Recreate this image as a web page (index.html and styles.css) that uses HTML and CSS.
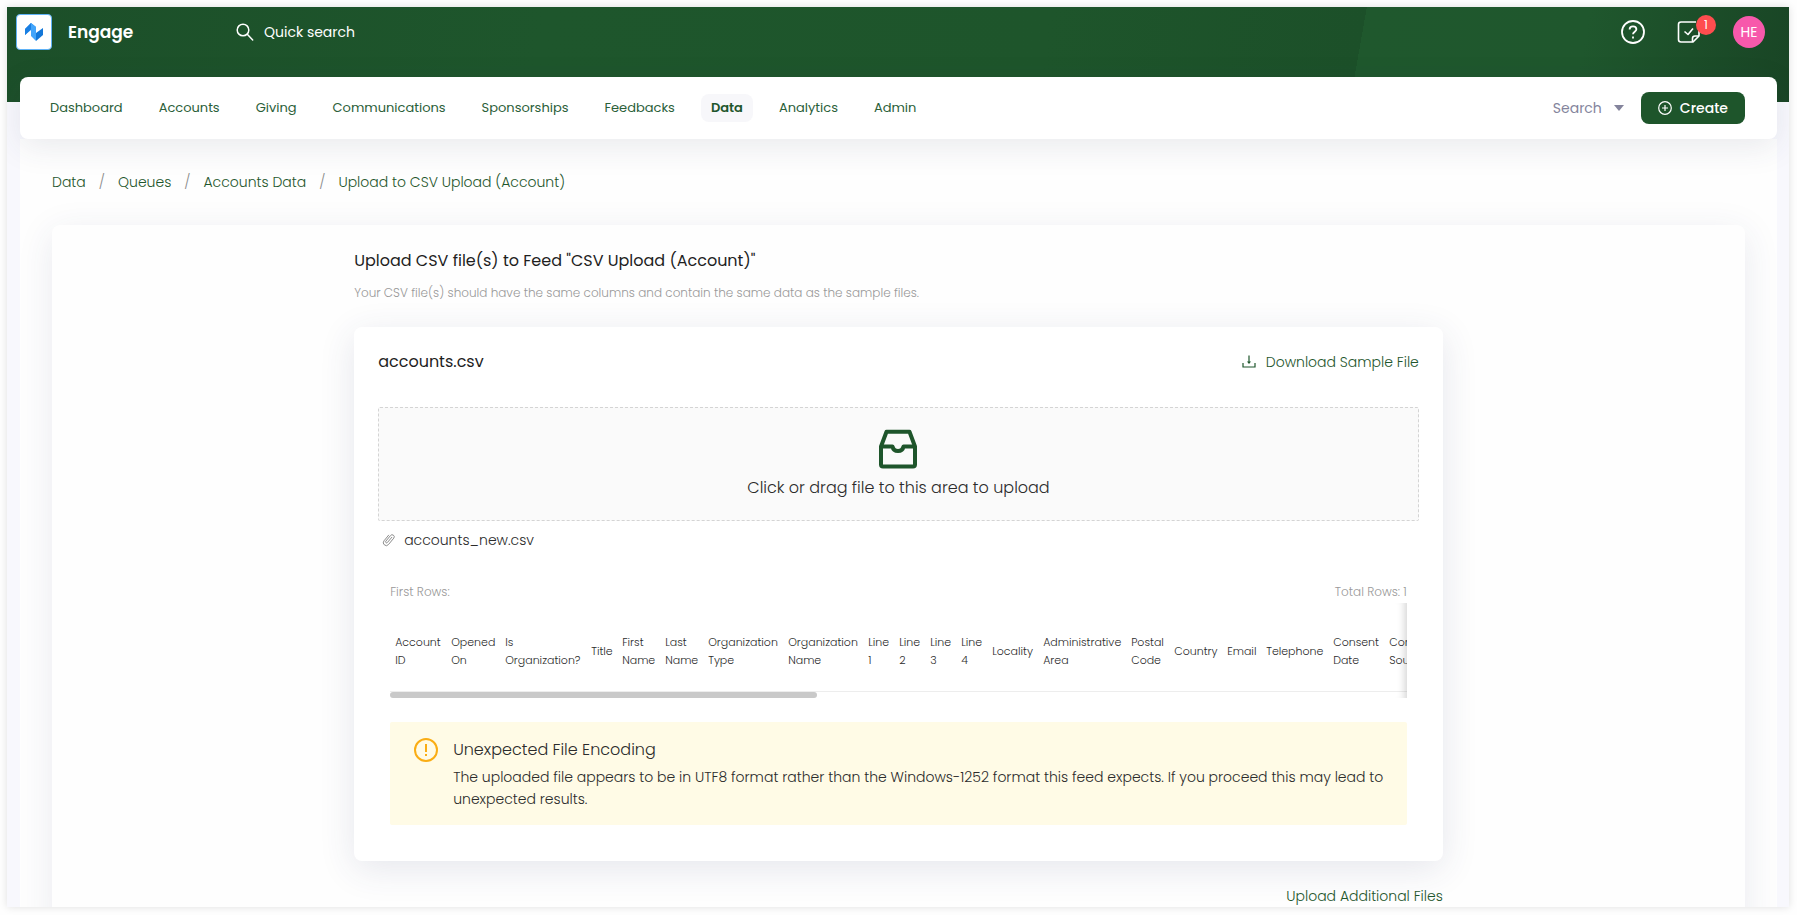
FILE: index.html
```html
<!DOCTYPE html>
<html lang="en">
<head>
<meta charset="utf-8">
<meta name="viewport" content="width=device-width, initial-scale=1">
<title>Engage - Upload to CSV Upload (Account)</title>
<link rel="stylesheet" href="styles.css">
</head>
<body>
<div class="app">
  <header class="topbar">
    <a class="brand" href="#">
      <span class="brand-logo">
        <svg viewBox="0 0 20 20" width="20" height="20" aria-hidden="true">
          <path d="M1 7 7 1l5 4v8l-5-5-6 5z" fill="#2b8ff0"/>
          <path d="M1 7l6-6v6l-6 6z" fill="#1a7fe2"/>
          <path d="M7 1l5 4v14l-5-5z" fill="#42a5fb"/>
          <path d="M12 11l7-5v7l-7 6z" fill="#1377d8"/>
        </svg>
      </span>
      <span class="brand-name">Engage</span>
    </a>
    <button class="quick-search" type="button">
      <svg viewBox="0 0 18 18" width="18" height="18" fill="none" stroke="currentColor" stroke-width="1.5" stroke-linecap="round" aria-hidden="true"><circle cx="7" cy="7" r="5.8"/><path d="M11.3 11.3l5.4 5.6"/></svg>
      Quick search
    </button>
    <div class="top-actions">
      <button class="icon-button" type="button" aria-label="Help">
        <svg viewBox="0 0 24 24" width="24" height="24" fill="none" stroke="currentColor" stroke-width="1.8" aria-hidden="true"><circle cx="12" cy="12" r="11"/><path d="M8.6 9.4c0-2 1.5-3 3.4-3s3.4 1.1 3.4 2.900c0 2.300-3.400 2.500-3.400 4.900"/><path d="M12 16.600v2"/></svg>
      </button>
      <button class="icon-button" type="button" aria-label="Tasks">
        <svg viewBox="0 0 24 24" width="24" height="24" fill="none" stroke="currentColor" stroke-width="1.600" stroke-linejoin="round" aria-hidden="true"><path d="M22 10v6l-6 6H4a2.500 2.500 0 0 1-2.500-2.500v-15A2.500 2.500 0 0 1 4 2h15"/><path d="M15.500 22v-3.500a2.500 2.500 0 0 1 2.500-2.500h4"/><path d="M7.500 11.500l3.500 3 5-6"/></svg>
        <span class="badge">1</span>
      </button>
      <button class="avatar" type="button" aria-label="Account menu">HE</button>
    </div>
  </header>

  <nav class="navbar" aria-label="Main">
    <ul class="menu">
      <li><a href="#">Dashboard</a></li>
      <li><a href="#">Accounts</a></li>
      <li><a href="#">Giving</a></li>
      <li><a href="#">Communications</a></li>
      <li><a href="#">Sponsorships</a></li>
      <li><a href="#">Feedbacks</a></li>
      <li><a class="active" href="#" aria-current="page">Data</a></li>
      <li><a href="#">Analytics</a></li>
      <li><a href="#">Admin</a></li>
    </ul>
    <button class="search-menu" type="button">Search <span class="caret"></span></button>
    <button class="create" type="button">
      <svg viewBox="0 0 14 14" width="14" height="14" fill="none" stroke="currentColor" stroke-width="1.200" aria-hidden="true"><circle cx="7" cy="7" r="6.300"/><path d="M7 4v6M4 7h6"/></svg>
      Create
    </button>
  </nav>

  <main class="content">
    <ol class="breadcrumb" aria-label="Breadcrumb">
      <li><a href="#">Data</a></li>
      <li><a href="#">Queues</a></li>
      <li><a href="#">Accounts Data</a></li>
      <li><a href="#">Upload to CSV Upload (Account)</a></li>
    </ol>

    <section class="panel">
      <div class="panel-column">
        <h1 class="title">Upload CSV file(s) to Feed "CSV Upload (Account)"</h1>
        <p class="subtitle">Your CSV file(s) should have the same columns and contain the same data as the sample files.</p>

        <article class="file-card">
          <header class="file-head">
            <h2 class="title">accounts.csv</h2>
            <a class="download" href="#">
              <svg viewBox="0 0 14 14" width="14" height="14" fill="none" stroke="currentColor" stroke-width="1.200" aria-hidden="true"><path d="M1 8v4h12V8M7 .5v7"/><path d="M5 6.500h4L7 9z" fill="currentColor" stroke="none"/></svg>
              Download Sample File
            </a>
          </header>

          <button class="dropzone" type="button">
            <svg viewBox="0 0 40 40" width="40" height="40" fill="none" stroke="currentColor" stroke-width="4" stroke-linejoin="round" aria-hidden="true"><path d="M3 17.500 8.500 2.800h23L37 17.500V35.500a2 2 0 0 1-2 2H5a2 2 0 0 1-2-2z"/><path d="M3 17.500h11.500c.6 3 2.700 4.500 5.500 4.500s4.900-1.500 5.500-4.500H37"/></svg>
            Click or drag file to this area to upload
          </button>

          <div class="attachment">
            <svg viewBox="0 0 14 14" width="14" height="14" fill="none" stroke="currentColor" stroke-width="1" stroke-linecap="round" aria-hidden="true"><path d="M9.800 4.300 5.400 9.500a1 1 0 0 1-1.600-1.300l4.700-5.600a2 2 0 0 1 3.300 2.500l-5.300 6.400a2.900 2.900 0 0 1-4.500-3.700l4.600-5.600"/></svg>
            accounts_new.csv
          </div>

          <div class="preview">
            <div class="preview-head"><span>First Rows:</span><span>Total Rows: 1</span></div>
            <div class="table-view">
              <table class="preview-table">
                <colgroup>
                  <col class="w56"><col class="w54"><col class="w86"><col class="w31"><col class="w43"><col class="w43"><col class="w80"><col class="w80">
                  <col class="w31"><col class="w31"><col class="w31"><col class="w31"><col class="w51"><col class="w88"><col class="w43"><col class="w53"><col class="w39"><col class="w67"><col class="w56"><col class="w56">
                </colgroup>
                <thead>
                  <tr>
                    <th scope="col">Account ID</th><th scope="col">Opened On</th><th scope="col">Is Organization?</th><th scope="col">Title</th><th scope="col">First Name</th><th scope="col">Last Name</th><th scope="col">Organization Type</th><th scope="col">Organization Name</th><th scope="col">Line<br>1</th><th scope="col">Line<br>2</th><th scope="col">Line<br>3</th><th scope="col">Line<br>4</th><th scope="col">Locality</th><th scope="col">Administrative Area</th><th scope="col">Postal Code</th><th scope="col">Country</th><th scope="col">Email</th><th scope="col">Telephone</th><th scope="col">Consent Date</th><th scope="col">Consent Source</th>
                  </tr>
                </thead>
              </table>
              <div class="scroll-thumb"></div>
            </div>

            <div class="alert" role="alert">
              <svg viewBox="0 0 24 24" width="24" height="24" fill="none" stroke="currentColor" stroke-width="2" aria-hidden="true"><circle cx="12" cy="12" r="11"/><path d="M12 6v8M12 16v2"/></svg>
              <div>
                <h3 class="alert-title">Unexpected File Encoding</h3>
                <p class="alert-text">The uploaded file appears to be in UTF8 format rather than the Windows-1252 format this feed expects. If you proceed this may lead to unexpected results.</p>
              </div>
            </div>
          </div>
        </article>

        <a class="more-files" href="#">Upload Additional Files</a>
      </div>
    </section>
  </main>
</div>
</body>
</html>
```

FILE: styles.css
```css
* { box-sizing: border-box; }

body {
  margin: 0;
  background: #fefefe;
  color: #2b2b2b;
  font-family: Poppins, Inter, "Liberation Sans", sans-serif;
  font-size: 14px;
  font-weight: 300;
  line-height: 22px;
}

h1, h2, h3, p, ul, ol { margin: 0; padding: 0; font-weight: inherit; }
ul, ol { list-style: none; }
a { color: #1e562c; text-decoration: none; }
svg { display: block; flex: none; }
button { border: 0; padding: 0; background: none; color: inherit; font: inherit; cursor: pointer; }

.app {
  display: flex;
  flex-direction: column;
  height: calc(100vh - 15px);
  margin: 7px 8px 8px 7px;
  overflow: hidden;
  background: linear-gradient(100deg, #1c4f29 0, #1e562c 30%, #1e552b 58%, #1c5029 75.6%, #1f582d 75.6%, #1f572d 88%, #194525 100%) top / 100% 95px no-repeat #f8f8fd;
  box-shadow: 0 0 8px rgba(0, 0, 0, .12);
}

.topbar {
  display: flex;
  align-items: center;
  flex: none;
  height: 50px;
  margin-bottom: 20px;
  padding: 0 24px 0 9px;
  color: #fff;
}
.brand { display: flex; align-items: center; gap: 16px; width: 220px; color: #fff; }
.brand-logo {
  display: grid;
  place-items: center;
  width: 36px;
  height: 36px;
  border: 1px solid #5fb2f7;
  border-radius: 4px;
  background: #fff;
}
.brand-name { font-size: 17px; font-weight: 600; }
.quick-search { display: flex; align-items: center; gap: 10px; font-weight: 400; }
.top-actions { display: flex; align-items: center; gap: 32px; margin-left: auto; }
.icon-button { position: relative; }
.badge {
  position: absolute;
  top: -5px;
  right: -15px;
  width: 20px;
  border-radius: 10px;
  background: #ff4d4f;
  font-size: 12px;
  font-weight: 400;
  line-height: 20px;
}
.avatar { width: 32px; height: 32px; border-radius: 50%; background: #f759ab; font-weight: 400; }

.navbar {
  display: flex;
  align-items: center;
  flex: none;
  z-index: 1;
  height: 62px;
  margin: 0 12px 0 13px;
  padding: 0 32px 0 20px;
  border-radius: 8px;
  background: #fff;
  box-shadow: 0 8px 32px rgba(50, 60, 90, .1);
}
.menu { display: flex; gap: 16px; margin-right: auto; font-size: 13px; font-weight: 400; }
.menu a { display: block; padding: 3px 10px; border-radius: 8px; color: #2b6039; }
.menu .active { background: #f7f7fa; color: #1e562c; font-weight: 600; }
.search-menu { display: flex; align-items: center; gap: 12px; margin-right: 17px; color: #84849c; font-weight: 400; }
.caret { border: 5px solid transparent; border-top: 6px solid #84849c; border-bottom: 0; }
.create {
  display: flex;
  align-items: center;
  gap: 8px;
  height: 32px;
  padding: 0 17px;
  border-radius: 8px;
  background: #1e552b;
  color: #fff;
  font-weight: 500;
}

.content {
  flex: 1;
  margin: 0 12px 0 13px;
  padding: 32px 32px 0;
  background: #fefefe;
  overflow: hidden;
}
.breadcrumb { display: flex; margin-bottom: 32px; }
.breadcrumb li + li::before { content: "/"; margin: 0 13px; color: #8c8c8c; }

.panel {
  display: grid;
  grid-template-columns: 1fr 4fr 1fr;
  padding: 24px 30px;
  border-radius: 8px;
  background: #fefefe;
  box-shadow: 0 8px 36px rgba(50, 60, 110, .1);
}
.panel-column { display: flex; flex-direction: column; grid-column: 2; min-width: 0; }
.title { color: #1f1f1f; font-size: 16px; font-weight: 400; line-height: 24px; }
.subtitle { margin: 9px 0 23px; color: #999; font-size: 12px; }

.file-card {
  padding: 24px 24px 36px;
  border-radius: 8px;
  background: #fff;
  box-shadow: 0 8px 36px rgba(50, 60, 110, .12);
}
.file-head { display: flex; justify-content: space-between; align-items: center; margin-bottom: 34px; }
.file-head .title { line-height: 22px; }
.download { display: flex; align-items: center; gap: 10px; }
.dropzone {
  display: flex;
  flex-direction: column;
  align-items: center;
  gap: 6px;
  width: 100%;
  padding: 21px 0 20px;
  border: 1px dashed #d4d4d4;
  border-radius: 2px;
  background: #fafafa;
  font-size: 16px;
  line-height: 25px;
}
.dropzone svg { color: #1e552b; }
.attachment { display: flex; align-items: center; gap: 8px; padding: 8px 4px 0; }
.attachment svg { color: #8c8c8c; }

.preview { padding: 30px 12px 0; }
.preview-head { display: flex; justify-content: space-between; color: #999; font-size: 12px; }
.table-view { position: relative; overflow: hidden; }
.table-view::after {
  content: "";
  position: absolute;
  inset: 0;
  box-shadow: inset -10px 0 8px -8px rgba(0, 0, 0, .18);
  pointer-events: none;
}
.preview-table { table-layout: fixed; width: 1050px; border-collapse: collapse; }
.preview-table th {
  height: 88px;
  padding: 8px 0 0 5px;
  border-bottom: 1px solid #ededed;
  font-size: 11px;
  font-weight: 300;
  line-height: 18px;
  text-align: left;
}
.w31 { width: 31px; }
.w39 { width: 39px; }
.w43 { width: 43px; }
.w51 { width: 51px; }
.w53 { width: 53px; }
.w54 { width: 54px; }
.w56 { width: 56px; }
.w67 { width: 67px; }
.w80 { width: 80px; }
.w86 { width: 86px; }
.w88 { width: 88px; }
.scroll-thumb { width: 42%; height: 6px; border-radius: 3px; background: #c9c9c9; }

.alert {
  display: flex;
  gap: 15px;
  margin-top: 24px;
  padding: 16px 20px 15px 24px;
  border-radius: 2px;
  background: #fffbe6;
}
.alert svg { color: #faad14; }
.alert-title { margin-bottom: 4px; font-size: 16px; line-height: 24px; }
.alert-text { line-height: 22px; }
.more-files { align-self: flex-end; margin-top: 24px; }
```
